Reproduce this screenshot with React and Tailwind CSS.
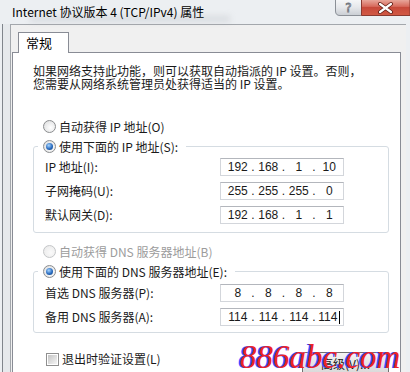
import React from 'react';

const cjk = "font-['Noto_Sans_CJK_SC','Noto_Sans',sans-serif]";
const num = "font-['Liberation_Sans','Noto_Sans_CJK_SC',sans-serif]";

function Radio({ checked, disabled }) {
  return (
    <span
      className={`flex items-center justify-center w-[13px] h-[13px] rounded-full border shrink-0 ${
        disabled
          ? 'border-[#c4c6c8] bg-[radial-gradient(circle_at_60%_60%,#fafafa,#e8e8e8)]'
          : 'border-[#8b8d8f] bg-[radial-gradient(circle_at_60%_60%,#ffffff,#d9dadb)]'
      }`}
    >
      {checked && (
        <span className="w-[7px] h-[7px] rounded-full bg-[radial-gradient(circle_at_40%_35%,#a8d6ff,#2a6cc0_55%,#0e3b74)]" />
      )}
    </span>
  );
}

function RadioRow({ label, checked, disabled }) {
  return (
    <div className={`flex items-center h-[19px] gap-[3px] ${disabled ? 'text-[#9c9c9c]' : 'text-[#1a1a1a]'}`}>
      <Radio checked={checked} disabled={disabled} />
      <span>{label}</span>
    </div>
  );
}

function IpBox({ parts, caret }) {
  return (
    <div className={`flex items-center w-[124px] h-[18px] pl-[3px] bg-white border border-[#d3d6db] border-t-[#b3b6bc] text-[12px] text-[#1a1a1a] ${num}`}>
      {parts.map((p, i) => (
        <React.Fragment key={i}>
          <span className="flex items-center justify-center w-[28px]">
            {p}
            {caret && i === 3 && <span className="ml-[2px] w-px h-[13px] bg-black" />}
          </span>
          {i < 3 && <span className="w-[3px] flex justify-center">.</span>}
        </React.Fragment>
      ))}
    </div>
  );
}

function FieldRow({ label, parts, caret }) {
  return (
    <div className="flex items-center h-[18px]">
      <span className="w-[175px] text-[#1a1a1a]">{label}</span>
      <IpBox parts={parts} caret={caret} />
    </div>
  );
}

function Group({ legend, className, children }) {
  return (
    <fieldset className="border border-[#d5dce2] rounded-[3px] px-0">
      <legend className="ml-[4px] pl-[5px] pr-[8px]">
        <RadioRow label={legend} checked />
      </legend>
      <div className={`flex flex-col gap-[6px] pl-[11px] ${className}`}>{children}</div>
    </fieldset>
  );
}

function CaptionButtons() {
  return (
    <svg width="75" height="16" viewBox="0 0 75 16" className="block">
      <defs>
        <linearGradient id="hg" x1="0" y1="0" x2="0" y2="1">
          <stop offset="0" stopColor="#f7f8f9" />
          <stop offset="0.5" stopColor="#e6e8eb" />
          <stop offset="1" stopColor="#c9cdd3" />
        </linearGradient>
        <linearGradient id="cg" x1="0" y1="0" x2="0" y2="1">
          <stop offset="0" stopColor="#eab0a4" />
          <stop offset="0.45" stopColor="#d76a5c" />
          <stop offset="0.5" stopColor="#c7493a" />
          <stop offset="1" stopColor="#d25a45" />
        </linearGradient>
      </defs>
      <path d="M0.5 -1 V11 Q0.5 15.5 5 15.5 H26.5 V-1 Z" fill="url(#hg)" stroke="#8b9097" />
      <path d="M26.5 -1 V15.5 H75 V-1 Z" fill="url(#cg)" stroke="#8a3a30" />
      <text x="13.5" y="12" textAnchor="middle" fontSize="12" fontFamily="DejaVu Sans, sans-serif" fill="#ffffff" stroke="#6f757d" strokeWidth="0.8">?</text>
      <path d="M45 4 L56 12 M56 4 L45 12" stroke="#5e1c14" strokeWidth="4" strokeLinecap="round" />
      <path d="M45 4 L56 12 M56 4 L45 12" stroke="#ffffff" strokeWidth="2.2" strokeLinecap="round" />
    </svg>
  );
}

export default function App() {
  return (
    <div className={`relative w-[410px] h-[372px] overflow-hidden flex flex-col bg-[#eceff2] text-[12px] ${cjk}`}>
      {/* title bar */}
      <div className="relative flex h-[24px] shrink-0">
        <div className="absolute left-[30px] top-[16px] w-[200px] h-[6px] bg-[#9aa0a8]/25 blur-[3px]" />
        <span className="relative pl-[12px] pt-[3px] text-[12px] text-black leading-[18px]">
          Internet 协议版本 4 (TCP/IPv4) 属性
        </span>
        <div className="ml-auto self-start">
          <CaptionButtons />
        </div>
      </div>

      {/* body */}
      <div className="flex flex-1 min-h-0 pl-[2px]">
        <div className="w-[8px] border-l border-[#80858c] bg-[#e6e9ec]" />
        <div className="flex-1 flex flex-col bg-[#f0f0f0] border-l border-t border-[#a3a7ac] mr-[4px]">
          {/* tab strip */}
          <div className="flex pl-[7px] pt-[7px]">
            <div className="flex items-center w-[51px] h-[21px] pl-[7px] bg-white border border-b-0 border-[#898c95] text-[13px] text-black relative z-10 -mb-px">
              常规
            </div>
          </div>
          {/* panel */}
          <div className="flex-1 ml-[1px] w-[389px] bg-white border border-[#898c95] pl-[20px] pr-[11px] pt-[11px]">
            <p className="leading-[13px] text-[#1a1a1a]">
              如果网络支持此功能，则可以获取自动指派的 IP 设置。否则，
              <br />
              您需要从网络系统管理员处获得适当的 IP 设置。
            </p>

            <div className="mt-[27px] pl-[10px]">
              <RadioRow label="自动获得 IP 地址(O)" />
            </div>

            <div className="mt-[1px]">
              <Group legend="使用下面的 IP 地址(S):" className="pt-[2px] pb-[8px]">
                <FieldRow label="IP 地址(I):" parts={['192', '168', '1', '10']} />
                <FieldRow label="子网掩码(U):" parts={['255', '255', '255', '0']} />
                <FieldRow label="默认网关(D):" parts={['192', '168', '1', '1']} />
              </Group>
            </div>

            <div className="mt-[9px] pl-[10px]">
              <RadioRow label="自动获得 DNS 服务器地址(B)" disabled />
            </div>

            <div className="mt-[1px]">
              <Group legend="使用下面的 DNS 服务器地址(E):" className="pt-[3px] pb-[6px]">
                <FieldRow label="首选 DNS 服务器(P):" parts={['8', '8', '8', '8']} />
                <FieldRow label="备用 DNS 服务器(A):" parts={['114', '114', '114', '114']} caret />
              </Group>
            </div>

            <div className="flex items-start justify-between mt-[17px]">
              <label className="flex items-center h-[18px] ml-[13px] gap-[3px] text-[#1a1a1a]">
                <span className="flex items-center justify-center w-[13px] h-[13px] border border-[#8f8f8f] bg-white">
                  <span className="w-[9px] h-[9px] bg-[linear-gradient(135deg,#c4c4c4,#f5f5f5)]" />
                </span>
                退出时验证设置(L)
              </label>
              <button className="mt-[2px] w-[87px] h-[23px] rounded-[3px] border border-[#707070] bg-[#e6e6e6] bg-linear-to-b from-[#f3f3f3] to-[#d8d8d8] text-[#1a1a1a] text-[12px] leading-[21px]">
                高级(V)...
              </button>
            </div>
          </div>
        </div>
      </div>

      {/* watermark */}
      <div className="absolute left-[240px] top-[339px] leading-[36px] text-[33px] italic text-[#ee2228] font-['Liberation_Serif',serif] [text-shadow:-2px_0_0_#3b4bff]">
        886abc.com
      </div>
    </div>
  );
}
